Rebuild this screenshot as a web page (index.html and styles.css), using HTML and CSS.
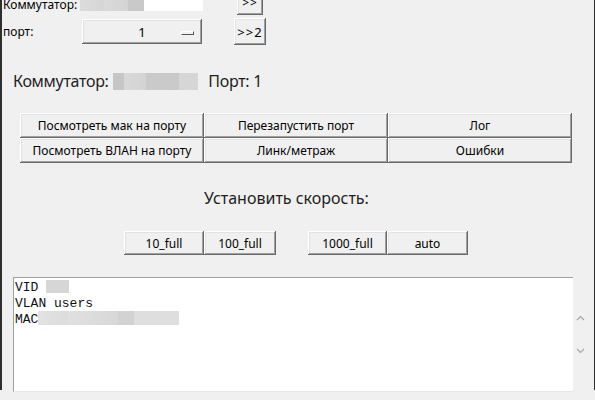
FILE: index.html
```html
<!DOCTYPE html>
<html lang="ru">
<head>
    <meta charset="UTF-8">
    <title>Порт коммутатора</title>
    <link rel="stylesheet" href="styles.css">
</head>
<body>
    <div class="window">
        <!-- connection form -->
        <div class="row row-switch">
            <span class="lbl lbl-switch">Коммутатор:</span>
            <div class="field"><span class="blur blur-ip"></span></div>
            <button class="btn btn-go">&gt;&gt;</button>
        </div>
        <div class="row row-port">
            <span class="lbl lbl-port">порт:</span>
            <button class="btn option">1<span class="indicator"></span></button>
            <button class="btn btn-go2">&gt;&gt;2</button>
        </div>

        <div class="status">
            Коммутатор: <span class="blur blur-sw"></span> Порт: 1
        </div>

        <!-- port actions -->
        <div class="actions">
            <button class="btn">Посмотреть мак на порту</button>
            <button class="btn">Перезапустить порт</button>
            <button class="btn">Лог</button>
            <button class="btn">Посмотреть ВЛАН на порту</button>
            <button class="btn">Линк/метраж</button>
            <button class="btn">Ошибки</button>
        </div>

        <div class="speed-title">Установить скорость:</div>
        <div class="speed">
            <div class="speed-group">
                <button class="btn sp-10">10_full</button>
                <button class="btn sp-100">100_full</button>
            </div>
            <div class="speed-group">
                <button class="btn sp-1000">1000_full</button>
                <button class="btn sp-auto">auto</button>
            </div>
        </div>

        <!-- output -->
        <div class="output-wrap">
            <div class="output">
                <div>VID <span class="blur blur-vid"></span></div>
                <div>VLAN users</div>
                <div>MAC<span class="blur blur-mac"></span></div>
            </div>
            <div class="scroll">
                <svg class="arrow arrow-up" width="9" height="6" viewBox="0 0 9 6"><path d="M1 5 L4.5 1.5 L8 5" fill="none" stroke="#a6a6a6" stroke-width="1.2"/></svg>
                <svg class="arrow arrow-down" width="9" height="6" viewBox="0 0 9 6"><path d="M1 1 L4.5 4.5 L8 1" fill="none" stroke="#a6a6a6" stroke-width="1.2"/></svg>
            </div>
        </div>
    </div>
</body>
</html>
```

FILE: styles.css
```css
/* Reset */
* {
    margin: 0;
    padding: 0;
    box-sizing: border-box;
}

body {
    width: 595px;
    height: 400px;
    overflow: hidden;
    background-color: #f0f0f0;
    font-family: 'Noto Sans', 'Open Sans', sans-serif;
    font-size: 12px;
    color: #000;
}

.window {
    height: 400px;
    border-left: 2px solid #2e2e2e;
    border-right: 1px solid #2e2e2e;
}

/* Buttons, classic raised look */
.btn {
    display: flex;
    align-items: center;
    justify-content: center;
    background-color: #f0f0f0;
    border: none;
    font-family: inherit;
    font-size: 12px;
    color: #000;
    box-shadow: inset -1px -1px #696969, inset 1px 1px #ffffff,
                inset -2px -2px #a0a0a0, inset 2px 2px #e3e3e3;
}

/* Connection form */
.row {
    display: flex;
    padding-left: 1px;
}

.row-switch {
    margin-top: -10px;
    height: 25px;
    align-items: flex-end;
}

.lbl {
    line-height: 15px;
}

.lbl-switch {
    width: 77px;
    margin-bottom: 3px;
}

.field {
    width: 123px;
    height: 21px;
    margin-bottom: 4px;
    background-color: #fff;
    display: flex;
    align-items: flex-end;
}

.btn-go {
    width: 26px;
    height: 25px;
    margin-left: 34px;
    letter-spacing: 1px;
}

.row-port {
    margin-top: 3px;
    height: 27px;
    align-items: center;
}

.lbl-port {
    width: 79px;
}

.option {
    position: relative;
    width: 120px;
    height: 25px;
    font-size: 13px;
}

.indicator {
    position: absolute;
    left: 99px;
    top: 12px;
    width: 13px;
    height: 4px;
    border-top: 1px solid #fff;
    border-left: 1px solid #fff;
    border-right: 1px solid #555;
    border-bottom: 1px solid #555;
}

.btn-go2 {
    width: 32px;
    height: 27px;
    margin-left: 32px;
    font-size: 13px;
    letter-spacing: 1px;
}

/* Blurred (hidden) values */
.blur {
    display: inline-block;
    vertical-align: middle;
}

.blur-ip {
    width: 64px;
    height: 14px;
    background: linear-gradient(to right, #dcdcdc 0, #d6d6d6 24px, #dadada 24px, #d4d4d4 48px, #c9c9c9 48px, #c9c9c9 64px);
}

.status {
    margin-top: 26px;
    padding-left: 11px;
    font-size: 16px;
    line-height: 20px;
    letter-spacing: -0.3px;
    color: #1e1e1e;
}

.blur-sw {
    width: 85px;
    height: 17px;
    margin: -3px 6px 0 1px;
    background: linear-gradient(to right, #c6c6c6 0, #c6c6c6 11px, #d8d8d8 11px, #d4d4d4 33px, #cacaca 33px, #c9c9c9 66px, #d6d6d6 66px, #d6d6d6 85px);
}

/* Action grid */
.actions {
    display: grid;
    grid-template-columns: repeat(3, 184px);
    grid-auto-rows: 25px;
    margin: 22px 0 0 18px;
}

.speed-title {
    margin-top: 25px;
    padding-left: 202px;
    font-size: 16px;
    line-height: 20px;
    color: #1e1e1e;
}

.speed {
    display: flex;
    gap: 32px;
    margin: 23px 0 0 122px;
}

.speed-group {
    display: flex;
}

.speed .btn {
    height: 24px;
}

.sp-10 { width: 80px; }
.sp-100 { width: 72px; }
.sp-1000 { width: 79px; }
.sp-auto { width: 81px; }

/* Output */
.output-wrap {
    display: flex;
    margin: 22px 0 0 11px;
}

.output {
    width: 560px;
    height: 115px;
    padding: 2px 1px;
    background-color: #fff;
    border-top: 1px solid #a0a0a0;
    border-left: 1px solid #a0a0a0;
    border-bottom: 1px solid #e6e6e6;
    font-family: 'Liberation Mono', monospace;
    font-size: 13px;
    line-height: 16px;
    color: #111;
}

.blur-vid {
    width: 23px;
    height: 13px;
    margin-top: -3px;
    background-color: #d6d6d6;
}

.blur-mac {
    width: 141px;
    height: 14px;
    margin-top: -3px;
    background: linear-gradient(to right, #e2e2e2 0, #dcdcdc 30px, #e0e0e0 30px, #d8d8d8 80px, #d2d2d2 80px, #d2d2d2 96px, #dedede 96px, #dedede 141px);
}

.scroll {
    display: flex;
    flex-direction: column;
    gap: 27px;
    padding: 38px 0 0 3px;
}
```
